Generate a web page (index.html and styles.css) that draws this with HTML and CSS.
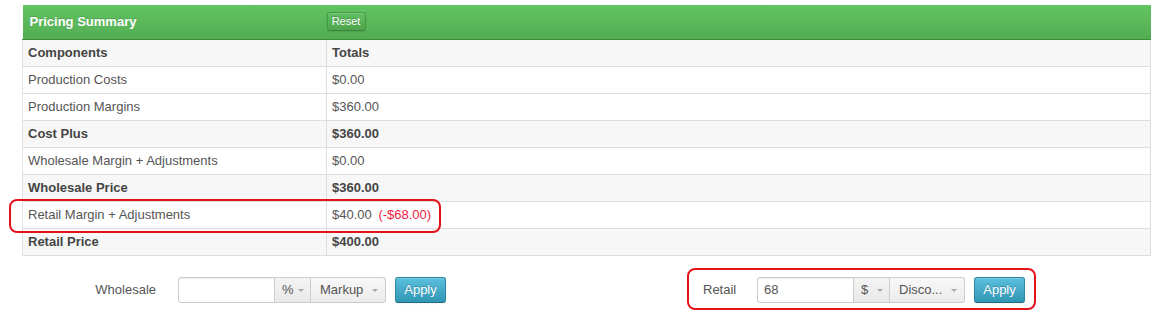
FILE: index.html
```html
<!DOCTYPE html>
<html>
<head>
<meta charset="utf-8">
<link rel="stylesheet" href="styles.css">
</head>
<body>
<div class="page">
  <div class="summary">
    <table class="pricing">
      <colgroup><col class="c1"><col class="c2"></colgroup>
      <thead>
        <tr class="title-row">
          <th class="title">Pricing Summary</th>
          <th class="title-btn"><span class="btn-reset">Reset</span></th>
        </tr>
      </thead>
      <tbody>
        <tr class="strong shade"><td>Components</td><td>Totals</td></tr>
        <tr><td>Production Costs</td><td>$0.00</td></tr>
        <tr><td>Production Margins</td><td>$360.00</td></tr>
        <tr class="strong shade"><td>Cost Plus</td><td>$360.00</td></tr>
        <tr><td>Wholesale Margin + Adjustments</td><td>$0.00</td></tr>
        <tr class="strong shade"><td>Wholesale Price</td><td>$360.00</td></tr>
        <tr><td>Retail Margin + Adjustments</td><td>$40.00 <span class="neg">(-$68.00)</span></td></tr>
        <tr class="strong shade"><td>Retail Price</td><td>$400.00</td></tr>
      </tbody>
    </table>
    <div class="row-mark"></div>
  </div>

  <div class="adjust">
    <div class="group wholesale">
      <span class="lbl lbl-right">Wholesale</span>
      <div class="input-group">
        <input class="field" type="text" value="">
        <span class="addon unit">%<i class="caret"></i></span>
        <span class="addon mode">Markup<i class="caret"></i></span>
      </div>
      <span class="btn-apply">Apply</span>
    </div>
    <div class="group retail marked">
      <span class="lbl">Retail</span>
      <div class="input-group">
        <input class="field" type="text" value="68">
        <span class="addon unit">$<i class="caret"></i></span>
        <span class="addon mode">Disco...<i class="caret"></i></span>
      </div>
      <span class="btn-apply">Apply</span>
    </div>
  </div>
</div>
</body>
</html>
```
FILE: styles.css
```css
* { box-sizing: border-box; }
html, body { margin: 0; padding: 0; background: #fff; }
body {
  font-family: "Liberation Sans", Arial, sans-serif;
  font-size: 13px;
  color: #555;
}
.page { padding: 5px 4px 0 22px; }

.summary { position: relative; width: 1129px; }
.pricing {
  width: 1129px;
  border-collapse: collapse;
  table-layout: fixed;
}
.pricing .c1 { width: 304px; }
.title-row th {
  height: 34px;
  padding: 0;
  background: linear-gradient(#62c462, #53ad53);
  border-bottom: 1px solid #3e8c3e;
  text-align: left;
  vertical-align: middle;
}
.title {
  padding-left: 7px !important;
  color: #fff;
  font-weight: bold;
  font-size: 13px;
  text-shadow: 0 -1px 0 rgba(0,0,0,0.15);
}
.title-btn { padding-left: 0 !important; }
.btn-reset {
  display: inline-block;
  width: 39px;
  height: 19px;
  line-height: 17px;
  text-align: center;
  font-size: 11px;
  font-weight: normal;
  color: #fff;
  background: linear-gradient(#5fbf5f, #4ea64e);
  border: 1px solid #459945;
  border-bottom-color: #3a853a;
  border-radius: 3px;
  box-shadow: inset 0 1px 0 rgba(255,255,255,0.2), 0 1px 2px rgba(0,0,0,0.1);
  text-shadow: 0 -1px 0 rgba(0,0,0,0.2);
}
.pricing td {
  padding: 4px 5px;
  line-height: 18px;
  border: 1px solid #ddd;
  white-space: nowrap;
}
.pricing tbody tr:first-child td { border-top: none; }
.pricing td:first-child { border-left-color: #e2e2e2; }
.shade td { background: #f7f7f7; }
.strong td { font-weight: bold; color: #444; }
.neg { color: #ee1c3e; margin-left: 3px; }

.row-mark {
  position: absolute;
  left: -13px;
  top: 194px;
  width: 432px;
  height: 34px;
  border: 2px solid #e3131c;
  border-radius: 8px;
  pointer-events: none;
}

.adjust {
  display: flex;
  align-items: flex-start;
  margin-top: 12px;
}
.group {
  display: flex;
  align-items: center;
  border: 2px solid transparent;
  padding: 7px 7px 5px 0;
  height: 42px;
  border-radius: 8px;
}
.wholesale { border: none; padding-left: 0; }
.retail { margin-left: 234px; padding-left: 14px; padding-right: 9px; }
.marked { border-color: #e3131c; }
.lbl { color: #555; margin-right: 20px; }
.lbl-right { width: 134px; text-align: right; margin-right: 22px; }
.retail .lbl { width: 34px; }

.input-group { display: flex; height: 26px; }
.field {
  width: 97px;
  height: 26px;
  margin: 0;
  padding: 0 6px;
  border: 1px solid #ccc;
  border-radius: 3px 0 0 3px;
  box-shadow: inset 0 1px 1px rgba(0,0,0,0.075);
  font-family: "Liberation Sans", Arial, sans-serif;
  font-size: 13px;
  color: #555;
  outline: none;
}
.addon {
  display: flex;
  align-items: center;
  justify-content: space-between;
  height: 26px;
  border: 1px solid #ccc;
  border-left: none;
  background: linear-gradient(#f4f4f4, #e9e9e9);
  color: #555;
  padding: 0 6px 0 7px;
}
.unit { width: 36px; }
.mode { width: 75px; padding-left: 9px; padding-right: 7px; border-radius: 0 3px 3px 0; background: linear-gradient(#f8f8f8, #ececec); }
.caret {
  display: inline-block;
  width: 0; height: 0;
  border-left: 3px solid transparent;
  border-right: 3px solid transparent;
  border-top: 3px solid #aaa;
  margin-top: 2px;
}
.btn-apply {
  display: inline-block;
  margin-left: 9px;
  width: 51px;
  height: 26px;
  line-height: 24px;
  text-align: center;
  color: #fff;
  font-size: 13px;
  background: linear-gradient(#5bc0de, #2f96b4);
  border: 1px solid #2a87a2;
  border-bottom-color: #1f6a80;
  border-radius: 3px;
  text-shadow: 0 -1px 0 rgba(0,0,0,0.25);
  box-shadow: inset 0 1px 0 rgba(255,255,255,0.2), 0 1px 2px rgba(0,0,0,0.05);
}
```
